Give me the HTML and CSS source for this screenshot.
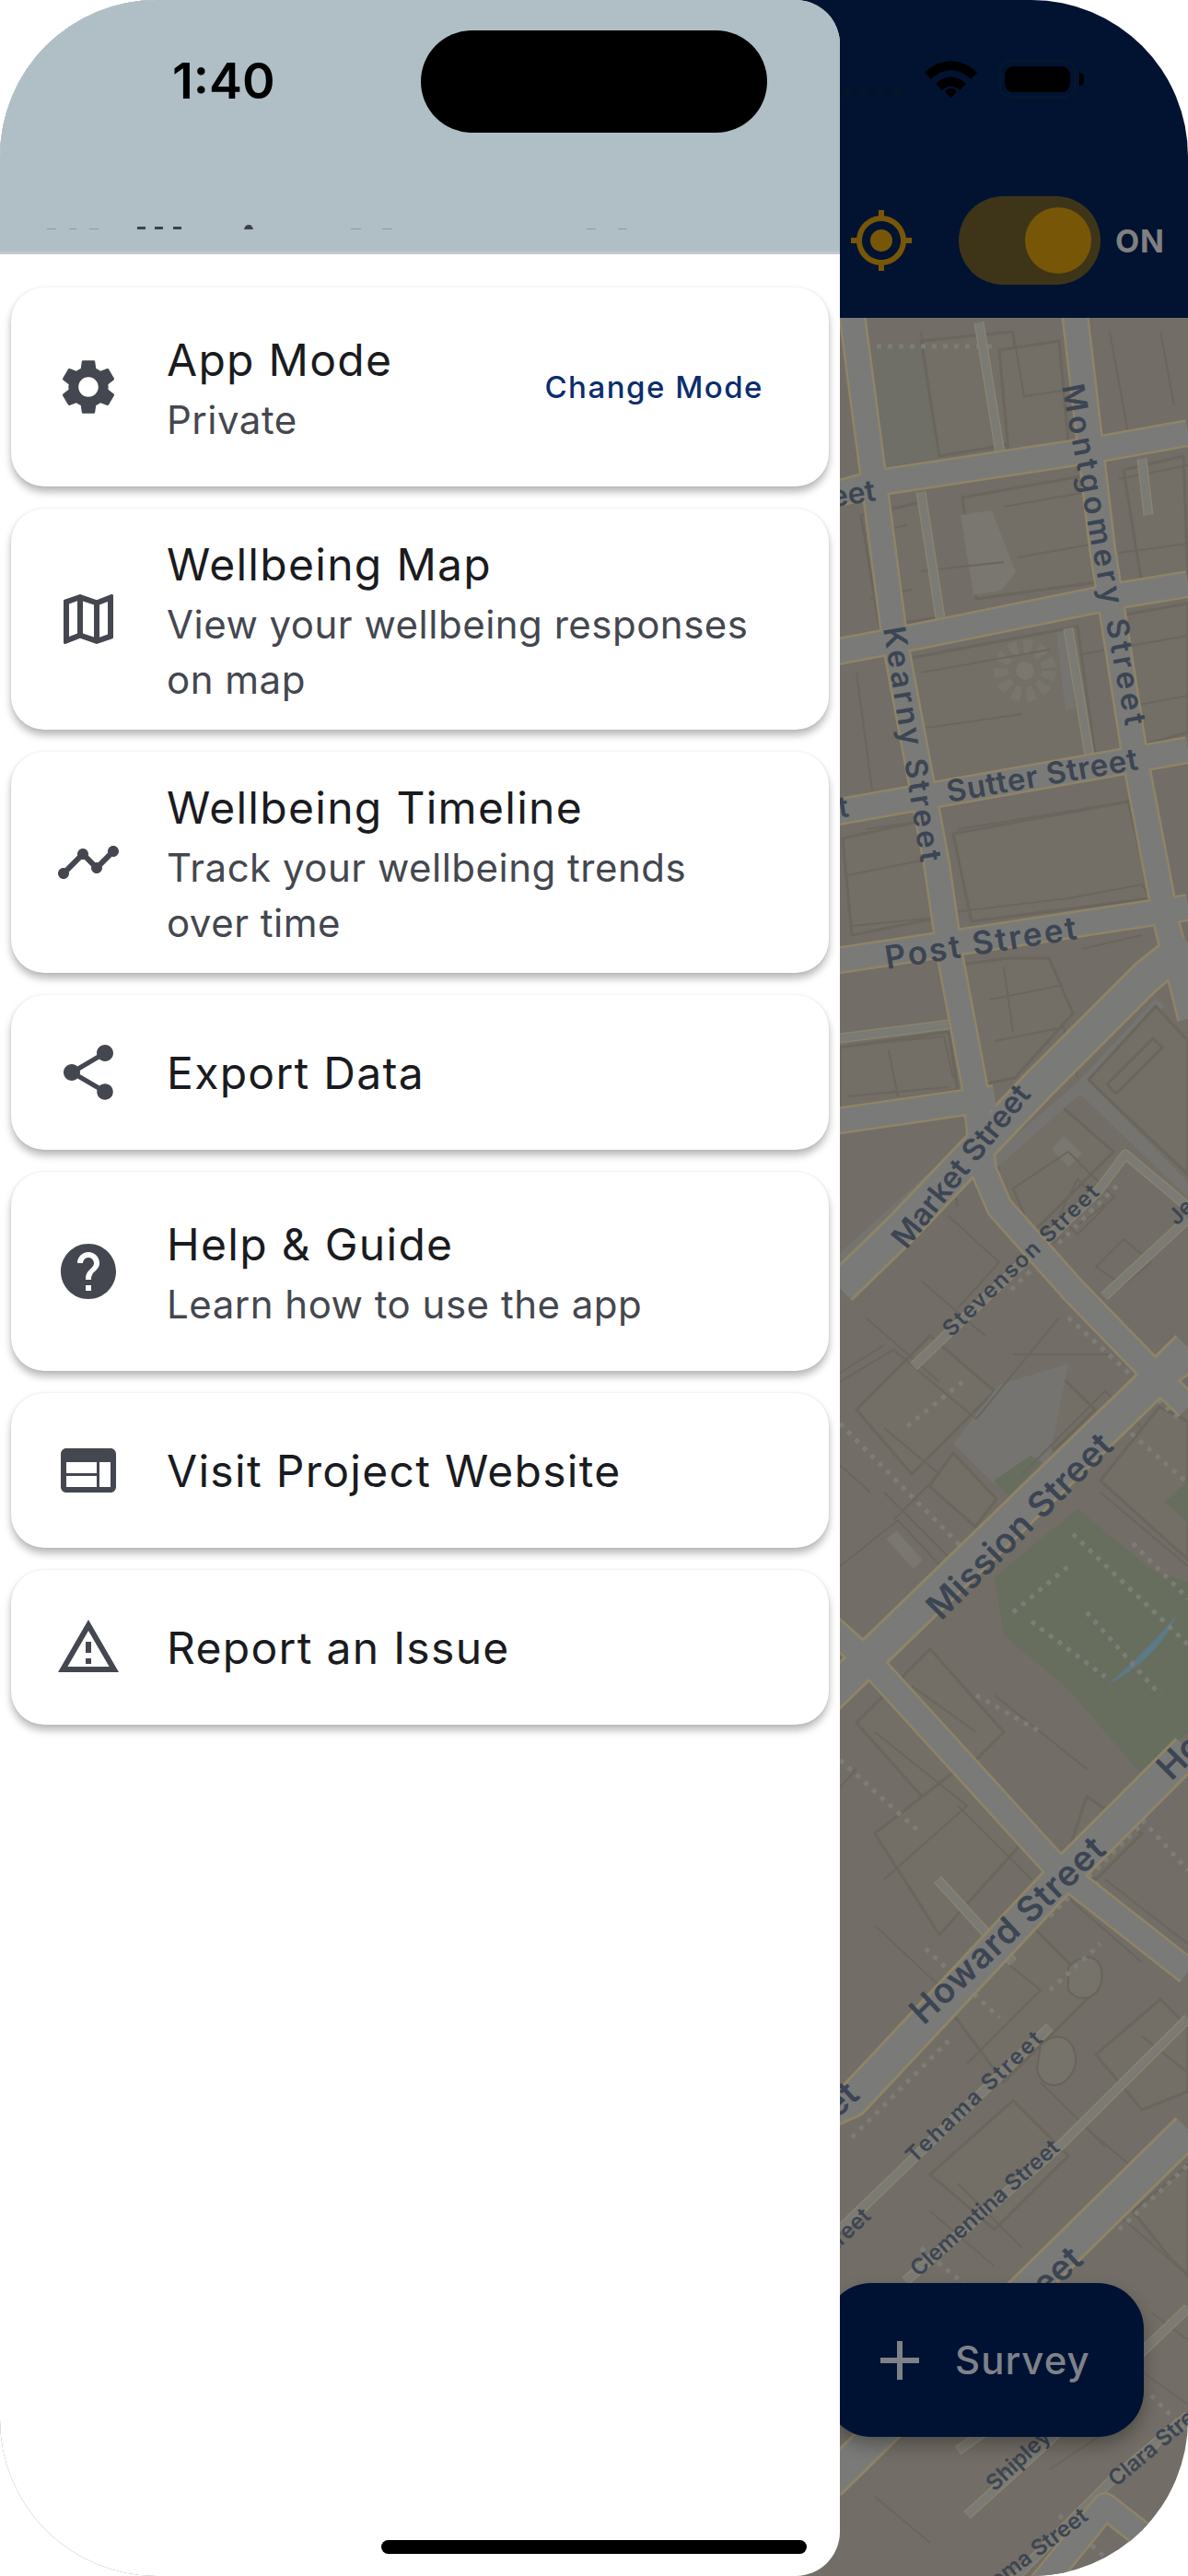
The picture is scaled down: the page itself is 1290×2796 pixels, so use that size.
FILE: index.html
```html
<!DOCTYPE html>
<html lang="en">
<head>
    <meta charset="UTF-8">
    <meta name="viewport" content="width=device-width, initial-scale=1.0">
    <title>Wellbeing Menu</title>
    <link rel="stylesheet" href="styles.css">
</head>
<body>
<div class="screen">
    <div class="page">
        <div class="app-bar">
            <div class="status-icons">
                <div class="signal"><span></span><span></span><span></span><span></span></div>
                <svg class="wifi" viewBox="0 0 57 41">
                    <path d="M0 13 C16 -4 41 -4 57 13 L50 20 C37 7 20 7 7 20 Z"/>
                    <path d="M12 25 C22 15 35 15 45 25 L38 32 C32 26 25 26 19 32 Z"/>
                    <path d="M22 33 C26 29 31 29 35 33 L28.500 41 Z"/>
                </svg>
                <div class="battery"><div class="battery-level"></div></div>
                <div class="battery-tip"></div>
            </div>
            <div class="toolbar">
                <svg class="target" viewBox="0 0 24 24"><path d="M12 8c-2.210 0-4 1.790-4 4s1.790 4 4 4 4-1.790 4-4-1.790-4-4-4zm8.940 3c-.46-4.170-3.770-7.480-7.940-7.940V1h-2v2.060C6.830 3.520 3.520 6.830 3.060 11H1v2h2.060c.46 4.170 3.770 7.480 7.940 7.940V23h2v-2.060c4.170-.46 7.480-3.770 7.940-7.940H23v-2h-2.060zM12 19c-3.870 0-7-3.130-7-7s3.130-7 7-7 7 3.130 7 7-3.130 7-7 7z"/></svg>
                <div class="toggle"><div class="knob"></div></div>
                <span class="toggle-label">ON</span>
            </div>
        </div>
        <div class="map-wrap">
            <svg class="map" viewBox="0 345 1290 2451" width="1290" height="2451">
                <defs>
                    <path id="wide-roads" d="M912 1398 L979 1333 L1125 1180 L1245 1060 L1290 1024 M880 1860 L965 1778 L1255 1497 L1290 1463 M880 2300 L925 2280 L1150 2040 L1290 1900 M900 2695 L1123 2476 L1290 2312"/>
                    <path id="mid-roads" d="M925 340 L972 697 L1017 937 L1032 1040 L1059 1183 L1068 1270 L1085 1310 L1165 1400 L1259 1497 L1290 1527 M1167 340 L1197 595 L1233 825 L1267 1003 L1293 1105 M900 538 L953 524 L1190 488 L1290 470 M900 709 L990 692 L1217 646 L1290 634 M900 883 L1290 814 M900 1044 L1170 1003 L1290 985 M900 1218 L1045 1197 L1080 1192 M900 1765 L947 1807 L1150 2030 L1290 2140 M1259 1497 L1290 1475 M1070 2880 L1200 2720 L1290 2790"/>
                    <path id="thin-roads" d="M912 1127 L1030 1112 M992 1483 L1192 1293 L1222 1253 L1290 1310 M1199 1407 L1290 1323 M912 2420 L1140 2200 M983 2476 L1152 2328 L1290 2191 M1050 2730 L1133 2655 L1290 2505 M1090 2810 L1207 2692 L1290 2622 M1000 534 L1022 677 M1160 682 L1183 820 M1063 350 L1087 498 M1240 498 L1247 559 M1018 2040 L1100 2130 M1040 2660 L1180 2560"/>
                </defs>

                <rect class="ground" x="0" y="345" width="1290" height="2451"/>

                <polygon class="block-dark" points="940,376 1080,376 1083,493 957,513"/>
                <polygon class="bldg" points="1044,1047 1095,1040 1139,1040 1165,1100 1102,1170 1065,1177"/>
                <polygon class="bldg" points="912,1137 1030,1120 1040,1183 912,1203"/>
                <polygon class="bldg" points="1085,1260 1152,1200 1209,1250 1122,1337 1079,1300"/>
                <polygon class="bldg" points="1105,1530 1155,1497 1189,1530 1145,1573"/>
                <polygon class="bldg" points="1009,1613 1035,1577 1082,1627 1059,1657"/>
                <polygon class="bldg" points="1195,1607 1259,1527 1290,1543 1290,1693"/>
                <polygon class="bldg" points="1000,370 1100,360 1110,480 1020,495"/>
                <polygon class="bldg" points="1085,380 1150,370 1160,480 1095,490"/>
                <polygon class="bldg" points="935,560 1000,545 1020,670 955,680"/>
                <polygon class="bldg" points="1045,540 1185,515 1205,630 1060,650"/>
                <polygon class="bldg" points="1220,510 1285,495 1290,625 1240,635"/>
                <polygon class="bldg" points="985,715 1170,680 1190,825 1015,860"/>
                <polygon class="bldg" points="1205,670 1290,655 1290,795 1235,810"/>
                <polygon class="bldg" points="1035,905 1225,870 1250,975 1055,1000"/>
                <polygon class="bldg" points="915,910 1005,890 1025,995 925,1015"/>
                <polygon class="bldg" points="930,1530 1010,1450 1080,1510 990,1600"/>
                <polygon class="bldg" points="930,1870 1010,1790 1090,1880 1010,1960"/>
                <polygon class="bldg" points="950,1990 1040,1920 1110,2000 1020,2100"/>
                <polygon class="bldg" points="1030,2180 1120,2090 1190,2160 1090,2260"/>
                <polygon class="bldg" points="1180,1950 1240,1990 1190,2040 1160,2010"/>
                <polygon class="bldg" points="1010,2360 1100,2280 1160,2340 1080,2420"/>
                <polygon class="bldg" points="1190,2230 1260,2170 1290,2200 1290,2270 1240,2290"/>
                <polygon class="bldg" points="930,2560 1010,2480 1060,2520 980,2610"/>
                <polygon class="bldg" points="1230,2400 1290,2350 1290,2470 1270,2450"/>
                <polygon class="plaza" points="1043,559 1077,554 1103,621 1087,641 1057,646"/>
                <polygon class="plaza" points="1142,1247 1155,1233 1175,1252 1160,1267"/>
                <polygon class="plaza" points="962,1670 974,1662 1002,1693 992,1703"/>
                <polygon class="strip" points="1147,687 1160,684 1167,769 1157,771"/>
                <circle class="ring" cx="1113" cy="728" r="26"/>
                <circle class="plaza" cx="1113" cy="728" r="10"/>
                <polygon class="strip" points="912,1360 1045,1240 1055,1250 912,1384"/>
                <polygon class="strip" points="1079,1253 1172,1173 1255,1083 1265,1092 1178,1183 1082,1268"/>
                <polygon class="strip" points="1165,1180 1178,1170 1290,1283 1290,1300"/>
                <polygon class="strip" points="1035,1567 1085,1503 1160,1480 1139,1587 1079,1610"/>
                <polygon class="bldg" points="1182,1172 1255,1092 1290,1130 1290,1275"/>
                <polygon class="bldg" points="1202,1177 1252,1127 1262,1137 1212,1187"/>
                <polygon class="park" points="1079,1607 1119,1580 1132,1587 1095,1623"/>
                <polygon class="park" points="1080,1712 1170,1638 1253,1706 1290,1717 1290,1881 1237,1923 1160,1833 1090,1775"/>
                <polygon class="park" points="1265,1630 1290,1607 1290,1653"/>
                <path class="water" d="M1203 1828 C1230 1815 1262 1790 1277 1754 C1255 1780 1230 1805 1203 1828 Z"/>
                <path class="tree" d="M1160 2135 C1180 2115 1200 2125 1196 2150 C1192 2170 1172 2175 1160 2160 Z M1130 2220 C1150 2200 1170 2215 1168 2240 C1160 2270 1130 2270 1126 2245 Z"/>

                <path class="building" d="M1000 360 L1013 450 M1100 360 L1112 430 L1180 420 M1090 550 L1175 535 L1190 590 L1105 605 M1000 620 L1090 610 M1205 360 L1225 470 M1260 360 L1275 440 M1215 520 L1290 505 M1215 600 L1290 590 M940 580 L985 570 M945 650 L990 640 M1000 730 L1140 705 M1005 790 L1110 775 M1030 870 L1150 850 M1175 710 L1290 690 M1210 770 L1290 755 M930 730 L950 880 M940 900 L1010 890 M1040 900 L1225 870 M1035 990 L1160 975 L1240 960 L1260 995 M1060 1010 L1190 990 M920 950 L1020 930 M925 1005 L1025 995 M1075 1085 L1150 1070 M1080 1130 L1155 1115 L1170 1170 M1090 1050 L1100 1120 M1175 1030 L1240 1015 M920 1135 L1025 1125 L1035 1170 M920 1190 L1030 1180 M965 1140 L975 1190 M1030 1260 L1040 1310 M1030 1320 L1085 1370 L1040 1420 M1000 1390 L1070 1450 M940 1430 L1020 1500 M912 1490 L960 1460 M1100 1290 L1160 1250 L1210 1300 L1130 1360 Z M1170 1280 L1200 1310 L1170 1340 L1150 1320 Z M1220 1345 L1250 1370 L1220 1395 L1190 1375 Z M1060 1540 L1150 1430 M960 1550 L1020 1600 L970 1650 M912 1500 L970 1465 L1060 1540 M1100 1470 L1205 1470 M1110 1600 L1200 1510 L1240 1550 M960 1620 L1050 1710 M912 1700 L975 1650 L1040 1720 L970 1780 M1195 1620 L1290 1700 M912 1590 L945 1620 M950 1880 L1050 1960 L960 2040 M990 1830 L1060 1880 M930 1920 L912 1940 M1080 1840 L1180 1920 M950 2090 L1030 2165 L950 2240 M1040 1960 L1120 2040 M1080 2120 L1130 2160 L1050 2240 M1200 2040 L1290 2110 M1240 2210 L1290 2250 M1160 2060 L1240 2130 M1180 2310 L1250 2370 M1010 2400 L1080 2460 M1040 2370 L1110 2440 M1130 2260 L1200 2330 M1210 2400 L1290 2470 M1250 2510 L1290 2540 M950 2710 L1010 2760 M1140 2680 L1200 2640 M1220 2560 L1290 2610"/>

                <path class="dots" d="M940 376 L1080 376 M957 513 L1083 493 M940 376 L957 513 M912 1545 L1050 1685 M1160 1430 L1280 1540 M1098 1400 L1215 1285 M985 1548 L1045 1500 M1060 1680 L1120 1620 M1230 1675 L1290 1735 M1165 1665 L1290 1785 M1100 1750 L1160 1700 M1210 1540 L1290 1610 M912 1910 L1000 1990 M1005 2115 L1085 2190 M1180 2035 L1280 2125 M1240 1975 L1290 2030 M1140 2080 L1240 1980 M925 2320 L1030 2215 M1140 2160 L1195 2110 M1060 1840 L1130 1880 M1120 1760 L1200 1820 M1180 1750 L1260 1840 M1220 1945 L1290 1890 M1000 2440 L1060 2490 M1215 2420 L1290 2350 M1150 2730 L1215 2790 M1250 2600 L1290 2640"/>

                <use href="#thin-roads" class="thin-casing"/>
                <use href="#thin-roads" class="thin-fill"/>
                <use href="#mid-roads" class="mid-casing"/>
                <use href="#wide-roads" class="wide-casing"/>
                <use href="#mid-roads" class="mid-fill"/>
                <use href="#wide-roads" class="wide-fill"/>

                <text class="label" font-size="33" x="1153" y="419" textLength="376" transform="rotate(79.4 1153 419)">Montgomery Street</text>
                <text class="label" font-size="33" x="959" y="682" textLength="258" transform="rotate(80.9 959 682)">Kearny Street</text>
                <text class="label" font-size="33" x="1030" y="871" textLength="210" transform="rotate(-9.9 1030 871)">Sutter Street</text>
                <text class="label" font-size="35" x="963" y="1052" textLength="210" transform="rotate(-9 963 1052)">Post Street</text>
                <text class="label label-end" font-size="32" x="952" y="543" transform="rotate(-9 952 543)">Street</text>
                <text class="label label-end" font-size="32" x="923" y="886" transform="rotate(-9 923 886)">Street</text>
                <text class="label" font-size="33" x="984" y="1357" textLength="217" transform="rotate(-51 984 1357)">Market Street</text>
                <text class="label" font-size="24" x="1033" y="1452" textLength="225" transform="rotate(-44 1033 1452)">Stevenson Street</text>
                <text class="label" font-size="24" x="1278" y="1331" transform="rotate(-45 1278 1331)">Jessie</text>
                <text class="label" font-size="38" x="1022" y="1760" textLength="267" transform="rotate(-45 1022 1760)">Mission Street</text>
                <text class="label" font-size="38" x="1272" y="1934" transform="rotate(-45 1272 1934)">Howard</text>
                <text class="label" font-size="38" x="1003" y="2199" textLength="275" transform="rotate(-43.4 1003 2199)">Howard Street</text>
                <text class="label label-end" font-size="38" x="935" y="2276" transform="rotate(-43 935 2276)">Street</text>
                <text class="label" font-size="24" x="993" y="2349" textLength="194" transform="rotate(-43.7 993 2349)">Tehama Street</text>
                <text class="label label-end" font-size="24" x="947" y="2407" transform="rotate(-43 947 2407)">Street</text>
                <text class="label label-end" font-size="24" x="1152" y="2333" transform="rotate(-42 1152 2333)">Clementina Street</text>
                <text class="label label-end" font-size="38" x="1178" y="2455" transform="rotate(-43 1178 2455)">Street</text>
                <text class="label" font-size="24" x="1080" y="2705" transform="rotate(-43 1080 2705)">Shipley</text>
                <text class="label" font-size="24" x="1212" y="2700" transform="rotate(-40 1212 2700)">Clara Street</text>
                <text class="label label-end" font-size="24" x="1183" y="2734" transform="rotate(-37 1183 2734)">Natoma Street</text>
            </svg>
            <div class="fab">
                <svg class="fab-icon" viewBox="0 0 24 24"><path d="M19 13h-6v6h-2v-6H5v-2h6V5h2v6h6v2z"/></svg>
                <span>Survey</span>
            </div>
        </div>
    </div>

    <div class="drawer">
        <div class="drawer-header">
            <div class="time">1:40</div>
            <svg class="header-cut" viewBox="0 0 700 6" width="700" height="6">
                <path class="cut-light" d="M51 4h10v1H51z M75 4h8v1h-8z M97 4h10v1H97z M381 4h11v1h-11z M415 4h11v1h-11z M637 4h10v1h-10z M671 4h10v1h-10z"/>
                <path class="cut-dark" d="M149 2h9v3h-9z M168 2h9v3h-9z M188 2h9v3h-9z M265 5c1-4 3-5 5-5s4 1 5 5z"/>
            </svg>
        </div>
        <div class="menu">
            <div class="card card-sub">
                <svg class="card-icon" viewBox="0 0 24 24"><path d="M19.140 12.940c.04-.3.06-.61.06-.94 0-.32-.02-.64-.07-.94l2.030-1.580c.18-.14.23-.41.12-.61l-1.920-3.320c-.12-.22-.37-.29-.59-.22l-2.390.96c-.5-.38-1.030-.7-1.620-.94l-.36-2.540c-.04-.24-.24-.41-.48-.41h-3.840c-.24 0-.43.17-.47.41l-.36 2.540c-.59.24-1.130.57-1.620.94l-2.390-.96c-.22-.08-.47 0-.59.22L2.740 8.870c-.12.21-.08.47.12.61l2.030 1.580c-.05.3-.09.63-.09.94s.02.64.07.94l-2.030 1.580c-.18.14-.23.41-.12.61l1.920 3.320c.12.22.37.29.59.22l2.390-.96c.5.38 1.030.7 1.620.94l.36 2.540c.05.24.24.41.48.41h3.840c.24 0 .44-.17.47-.41l.36-2.540c.59-.24 1.130-.56 1.620-.94l2.390.96c.22.08.47 0 .59-.22l1.920-3.320c.12-.22.07-.47-.12-.61l-2.010-1.580zM12 15.600c-1.980 0-3.600-1.620-3.600-3.600s1.620-3.600 3.600-3.600 3.600 1.620 3.600 3.600-1.620 3.600-3.600 3.600z"/></svg>
                <div class="card-text">
                    <div class="card-title">App Mode</div>
                    <div class="card-desc">Private</div>
                </div>
                <span class="change-mode">Change Mode</span>
            </div>
            <div class="card">
                <svg class="card-icon" viewBox="0 0 24 24"><path d="M20.500 3l-.16.03L15 5.100 9 3 3.360 4.900c-.21.07-.36.25-.36.48V20.500c0 .28.22.5.5.5l.16-.03L9 18.900l6 2.100 5.640-1.900c.21-.07.36-.25.36-.48V3.500c0-.28-.22-.5-.5-.5zM10 5.470l4 1.400v11.660l-4-1.400V5.470zm-5 .99l3-1.010v11.700l-3 1.160V6.460zm14 11.080l-3 1.010V6.860l3-1.160v11.840z"/></svg>
                <div class="card-text">
                    <div class="card-title">Wellbeing Map</div>
                    <div class="card-desc">View your wellbeing responses on map</div>
                </div>
            </div>
            <div class="card">
                <svg class="card-icon" viewBox="0 0 24 24"><path d="M23 8c0 1.100-.9 2-2 2-.18 0-.35-.02-.51-.07l-3.560 3.550c.05.16.07.34.07.52 0 1.100-.9 2-2 2s-2-.9-2-2c0-.18.02-.36.07-.52l-2.550-2.550c-.16.05-.34.07-.52.07s-.36-.02-.52-.07l-4.550 4.560c.05.16.07.33.07.51 0 1.100-.9 2-2 2s-2-.9-2-2 .9-2 2-2c.18 0 .35.02.51.07l4.560-4.550C8.020 9.360 8 9.180 8 9c0-1.100.9-2 2-2s2 .9 2 2c0 .18-.02.36-.07.52l2.550 2.550c.16-.05.34-.07.52-.07s.36.02.52.07l3.550-3.560C19.020 8.350 19 8.180 19 8c0-1.100.9-2 2-2s2 .9 2 2z"/></svg>
                <div class="card-text">
                    <div class="card-title">Wellbeing Timeline</div>
                    <div class="card-desc">Track your wellbeing trends over time</div>
                </div>
            </div>
            <div class="card">
                <svg class="card-icon" viewBox="0 0 24 24"><path d="M18 16.080c-.76 0-1.440.3-1.960.77L8.910 12.700c.05-.23.09-.46.09-.7s-.04-.47-.09-.7l7.050-4.110c.54.5 1.250.81 2.040.81 1.660 0 3-1.340 3-3s-1.340-3-3-3-3 1.340-3 3c0 .24.04.47.09.7L8.040 9.810C7.500 9.310 6.790 9 6 9c-1.660 0-3 1.340-3 3s1.340 3 3 3c.79 0 1.500-.31 2.040-.81l7.120 4.160c-.05.21-.08.43-.08.65 0 1.610 1.310 2.920 2.920 2.920 1.610 0 2.920-1.310 2.920-2.920s-1.310-2.920-2.920-2.920z"/></svg>
                <div class="card-text">
                    <div class="card-title">Export Data</div>
                </div>
            </div>
            <div class="card card-sub">
                <svg class="card-icon" viewBox="0 0 24 24"><path d="M12 2C6.480 2 2 6.480 2 12s4.480 10 10 10 10-4.480 10-10S17.520 2 12 2zm1 17h-2v-2h2v2zm2.070-7.750l-.9.92C13.450 12.900 13 13.500 13 15h-2v-.5c0-1.100.45-2.100 1.170-2.830l1.240-1.260c.37-.36.59-.86.59-1.410 0-1.100-.9-2-2-2s-2 .9-2 2H8c0-2.210 1.790-4 4-4s4 1.790 4 4c0 .88-.36 1.680-.93 2.250z"/></svg>
                <div class="card-text">
                    <div class="card-title">Help &amp; Guide</div>
                    <div class="card-desc">Learn how to use the app</div>
                </div>
            </div>
            <div class="card">
                <svg class="card-icon" viewBox="0 0 24 24"><path d="M20 4H4c-1.100 0-1.990.9-1.990 2L2 18c0 1.100.9 2 2 2h16c1.100 0 2-.9 2-2V6c0-1.100-.9-2-2-2zm-5 14H4v-4h11v4zm0-5H4V9h11v4zm5 5h-4V9h4v9z"/></svg>
                <div class="card-text">
                    <div class="card-title">Visit Project Website</div>
                </div>
            </div>
            <div class="card">
                <svg class="card-icon" viewBox="0 0 24 24"><path d="M12 5.990L19.530 19H4.470L12 5.990M12 2L1 21h22L12 2zm1 14h-2v2h2v-2zm0-6h-2v4h2v-4z"/></svg>
                <div class="card-text">
                    <div class="card-title">Report an Issue</div>
                </div>
            </div>
        </div>
        <div class="home-bar"></div>
    </div>

    <div class="island"></div>
</div>
</body>
</html>
```

FILE: styles.css
```css
body {
    margin: 0;
    background: #fff;
    font-family: Inter, "Noto Sans", sans-serif;
}

.screen {
    position: relative;
    width: 1290px;
    height: 2796px;
    overflow: hidden;
    border-radius: 170px;
    background: #fff;
}

.page {
    display: flex;
    flex-direction: column;
    height: 100%;
}

.island {
    position: absolute;
    left: 457px;
    top: 33px;
    width: 376px;
    height: 111px;
    border-radius: 56px;
    background: #000;
}

/* app bar behind the drawer */
.app-bar {
    display: flex;
    flex-direction: column;
    align-items: flex-end;
    box-sizing: border-box;
    height: 345px;
    padding-top: 65px;
    background: #011331;
}

.status-icons {
    display: flex;
    align-items: flex-end;
    height: 42px;
    margin-right: 113px;
}

.signal {
    display: flex;
    gap: 7px;
    margin-right: 25px;
}

.signal span {
    width: 11px;
    height: 10px;
    border-radius: 3px;
    background: #06142b;
}

.wifi {
    width: 57px;
    height: 41px;
    margin-right: 23px;
    fill: #000;
}

.battery {
    box-sizing: border-box;
    width: 85px;
    height: 42px;
    padding: 4px;
    border: 3px solid #05162f;
    border-radius: 14px;
}

.battery-level {
    height: 100%;
    border-radius: 9px;
    background: #000;
}

.battery-tip {
    width: 5px;
    height: 14px;
    margin: 0 0 14px 3px;
    border-radius: 0 4px 4px 0;
    background: #000;
}

.toolbar {
    display: flex;
    align-items: center;
    margin-top: 106px;
    margin-right: 25px;
}

.target {
    width: 72px;
    height: 72px;
    margin-right: 48px;
    fill: #785608;
}

.toggle {
    display: flex;
    align-items: center;
    justify-content: flex-end;
    box-sizing: border-box;
    width: 154px;
    height: 96px;
    padding-right: 10px;
    border-radius: 48px;
    background: #3e3519;
}

.knob {
    width: 72px;
    height: 72px;
    border-radius: 50%;
    background: #785608;
}

.toggle-label {
    margin-left: 16px;
    font-size: 34px;
    font-weight: 700;
    letter-spacing: 1px;
    color: #808080;
}

/* map */
.map-wrap {
    position: relative;
    flex: 1;
}

.map {
    display: block;
}

.ground {
    fill: #726d66;
}

.block-dark {
    fill: #6f6e67;
}

.bldg {
    fill: #736e66;
    stroke: #6a665e;
    stroke-width: 3;
}

.plaza {
    fill: #79776f;
}

.strip {
    fill: #757471;
}

.ring {
    fill: none;
    stroke: #77756d;
    stroke-width: 16;
    stroke-dasharray: 9 6;
}

.park {
    fill: #676e5e;
}

.water {
    fill: #5b7a86;
}

.tree {
    fill: #76736b;
    stroke: #68645c;
    stroke-width: 2;
}

.building {
    fill: none;
    stroke: #6a665e;
    stroke-width: 2;
}

.dots {
    fill: none;
    stroke: #7d7c77;
    stroke-width: 5;
    stroke-dasharray: 5 7;
}

.wide-casing,
.wide-fill,
.mid-casing,
.mid-fill,
.thin-casing,
.thin-fill {
    fill: none;
    stroke-linejoin: round;
}

.wide-casing {
    stroke: #8f8467;
    stroke-width: 39;
}

.wide-fill {
    stroke: #7a7a79;
    stroke-width: 33;
}

.mid-casing {
    stroke: #8f8467;
    stroke-width: 30;
}

.mid-fill {
    stroke: #7a7a79;
    stroke-width: 25;
}

.thin-casing {
    stroke: #8a836f;
    stroke-width: 11;
}

.thin-fill {
    stroke: #7b7a75;
    stroke-width: 8;
}

.label {
    font-family: Inter, "Noto Sans", sans-serif;
    font-weight: 600;
    fill: #3c4553;
}

.label-end {
    text-anchor: end;
}

.fab {
    position: absolute;
    left: 896px;
    top: 2133px;
    display: flex;
    align-items: center;
    box-sizing: border-box;
    width: 346px;
    height: 167px;
    padding-left: 45px;
    border-radius: 50px;
    background: #001233;
    box-shadow: 0 9px 18px rgba(0, 0, 0, .3);
    font-size: 42px;
    font-weight: 500;
    letter-spacing: 1px;
    color: #7e8288;
}

.fab-icon {
    width: 72px;
    height: 72px;
    margin-right: 24px;
    fill: #7e8288;
}

/* drawer */
.drawer {
    position: absolute;
    left: 0;
    top: 0;
    width: 912px;
    height: 100%;
    border-radius: 0 48px 48px 0;
    overflow: hidden;
    background: #fff;
}

.drawer-header {
    box-sizing: border-box;
    height: 276px;
    padding-top: 55px;
    border-bottom: 3px solid #c4c6d0;
    background: #b0bec5;
}

.time {
    margin-left: 187px;
    font-size: 54px;
    line-height: 65px;
    font-weight: 600;
    color: #000;
}

.header-cut {
    display: block;
    margin-top: 124px;
}

.cut-light {
    fill: #8e9aa1;
}

.cut-dark {
    fill: #3e4347;
}

.menu {
    display: flex;
    flex-direction: column;
    gap: 24px;
    padding: 36px 12px 0;
}

.card {
    display: flex;
    align-items: center;
    box-sizing: border-box;
    min-height: 168px;
    padding: 24px 71px 24px 48px;
    border-radius: 36px;
    background: #fff;
    box-shadow: 0 6px 9px rgba(0, 0, 0, .28), 0 0 3px rgba(0, 0, 0, .08);
}

.card-sub {
    min-height: 216px;
}

.card-icon {
    flex: none;
    width: 72px;
    height: 72px;
    margin-right: 49px;
    fill: #44474f;
}

.card-text {
    flex: 1;
    max-width: 640px;
}

.card-title {
    margin-bottom: -2px;
    font-size: 48px;
    line-height: 74px;
    letter-spacing: 1.300px;
    color: #1a1b20;
}

.card-desc {
    font-size: 42px;
    line-height: 60px;
    letter-spacing: .5px;
    color: #44474f;
}

.change-mode {
    flex: none;
    font-size: 33px;
    font-weight: 500;
    letter-spacing: 1.500px;
    color: #0b2d6e;
}

.home-bar {
    position: absolute;
    left: 414px;
    top: 2757px;
    width: 462px;
    height: 15px;
    border-radius: 8px;
    background: #000;
}
```
